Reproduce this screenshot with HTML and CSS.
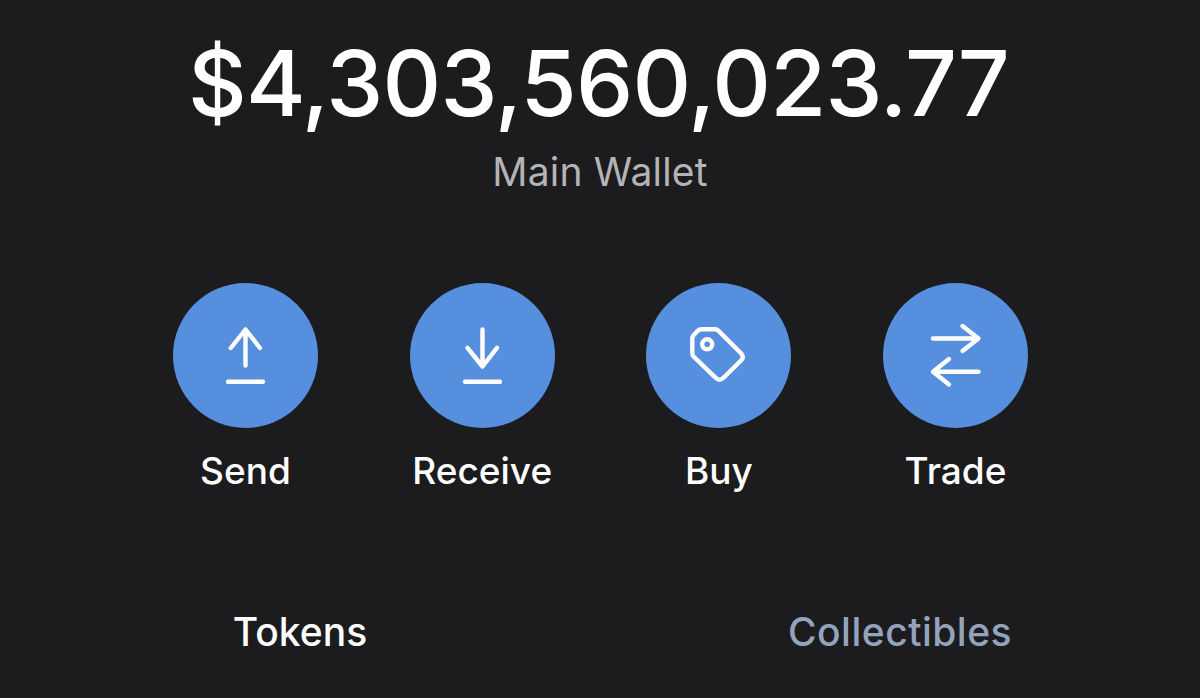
FILE: index.html
```html
<!DOCTYPE html>
<html lang="en">
<head>
    <meta charset="UTF-8">
    <meta name="viewport" content="width=device-width, initial-scale=1.0">
    <title>Main Wallet</title>
    <link rel="stylesheet" href="styles.css">
</head>
<body>

    <div class="balance">
        <h1 class="amount">$4,303,560,023.77</h1>
        <p class="wallet-name">Main Wallet</p>
    </div>

    <div class="actions">
        <button class="action">
            <span class="circle">
                <svg viewBox="0 0 145 145">
                    <path d="M72.5 82.5V46.5M57.8 65L72.5 46.5L87 65M55 98.7H90"/>
                </svg>
            </span>
            <span class="label">Send</span>
        </button>

        <button class="action">
            <span class="circle">
                <svg viewBox="0 0 145 145">
                    <path d="M72.5 46.5V83M57.5 64.8L72.5 83.5L87 64.8M55 98.7H90"/>
                </svg>
            </span>
            <span class="label">Receive</span>
        </button>

        <button class="action">
            <span class="circle">
                <svg viewBox="0 0 145 145">
                    <path d="M55.5 46.2H69Q71 46.2 72.3 47.6L95 70.2Q98.5 74 95 77.5L77 95.2Q73.5 98.2 70 95.2L47.5 73.5Q46.3 72 46.3 70V55.5Q46.3 53.5 47.7 52L52 47.6Q53.5 46.2 55.5 46.2Z"/>
                    <circle cx="61.2" cy="61.3" r="5"/>
                </svg>
            </span>
            <span class="label">Buy</span>
        </button>

        <button class="action">
            <span class="circle">
                <svg viewBox="0 0 145 145">
                    <path d="M50 55.5H95M79.5 43L95.5 55.5L79.5 68M95.5 88.8H51M66 76L50 88.8L66 101.5"/>
                </svg>
            </span>
            <span class="label">Trade</span>
        </button>
    </div>

    <div class="tabs">
        <a class="tab active">Tokens</a>
        <a class="tab">Collectibles</a>
    </div>

</body>
</html>
```

FILE: styles.css
```css
* {
    box-sizing: border-box;
}
body {
    margin: 0;
    height: 698px;
    overflow: hidden;
    background-color: #1c1c1e;
    color: #fff;
    font-family: Inter, "Liberation Sans", sans-serif;
}
.balance {
    height: 283px;
    padding-top: 28px;
    text-align: center;
}
.amount {
    margin: 0;
    padding-right: 3px;
    font-size: 91px;
    line-height: 110px;
    font-weight: 500;
    letter-spacing: -0.8px;
}
.wallet-name {
    margin: 9px 0 0;
    font-size: 39px;
    line-height: 50px;
    letter-spacing: 0.2px;
    color: #b4b4b6;
}
.actions {
    display: flex;
    justify-content: center;
    gap: 36.7px;
    padding-left: 1px;
}
.action {
    display: flex;
    flex-direction: column;
    align-items: center;
    width: 200px;
    padding: 0;
    border: none;
    background: none;
    color: #fff;
    font-family: inherit;
}
.circle {
    width: 145px;
    height: 145px;
    border-radius: 50%;
    background-color: #568fdd; /* Wallet blue */
}
.circle svg {
    display: block;
    fill: none;
    stroke: #fff;
    stroke-width: 4.4;
    stroke-linecap: round;
    stroke-linejoin: round;
}
.label {
    margin-top: 20px;
    font-size: 37px;
    line-height: 46px;
    font-weight: 500;
}
.tabs {
    display: flex;
    margin-top: 113px;
}
.tab {
    width: 600px;
    text-align: center;
    font-size: 39px;
    line-height: 50px;
    font-weight: 500;
    letter-spacing: 0.5px;
    color: #94a3bd;
}
.tab.active {
    letter-spacing: 0;
    color: #fff;
}
```
